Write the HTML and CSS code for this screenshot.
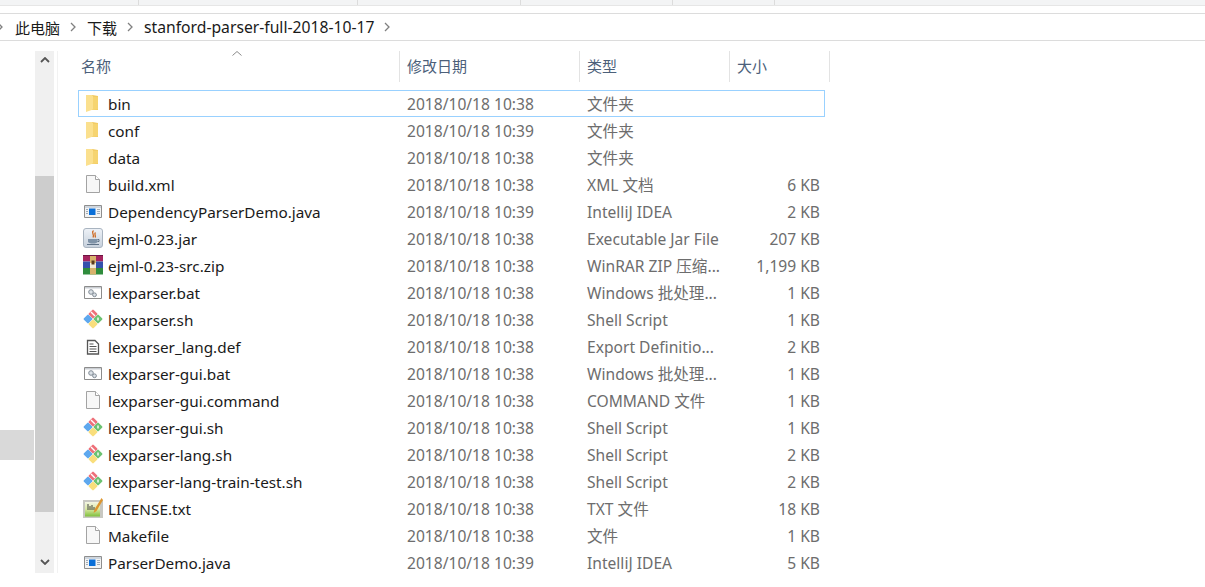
FILE: index.html
```html
<!DOCTYPE html>
<html lang="zh-CN">
<head>
    <meta charset="UTF-8">
    <title>stanford-parser-full-2018-10-17</title>
    <link rel="stylesheet" href="styles.css">
</head>
<body>
    <svg class="sprites" width="0" height="0">
        <defs>
            <linearGradient id="jar-bg" x1="0" y1="0" x2="0" y2="1">
                <stop offset="0" stop-color="#eef2f7"/>
                <stop offset="1" stop-color="#c6d0dc"/>
            </linearGradient>
            <linearGradient id="txt-bg" x1="0" y1="0" x2="0" y2="1">
                <stop offset="0" stop-color="#f4f6e4"/>
                <stop offset=".5" stop-color="#d8e8a0"/>
                <stop offset="1" stop-color="#7fbf3c"/>
            </linearGradient>
        </defs>
        <symbol id="i-folder" viewBox="0 0 20 20">
            <path d="M3 2h6l6 1v14H3z" fill="#efc558"/>
            <path d="M3 2h6l1 1v13.500L3 19z" fill="#fbe08e"/>
            <path d="M10 3.500h5V16.500l-5 .5z" fill="#f6d470"/>
        </symbol>
        <symbol id="i-file" viewBox="0 0 20 20">
            <path d="M3.500 1.500h9l4 4v13h-13z" fill="#f7f7f7" stroke="#a3a3a3"/>
            <path d="M12.500 1.500v4h4" fill="#fff" stroke="#a3a3a3"/>
        </symbol>
        <symbol id="i-idea" viewBox="0 0 20 20">
            <path d="M1.500 4.500h17v12h-17z" fill="#f3f3f3" stroke="#8e8e8e"/>
            <path d="M2 5h16v2H2z" fill="#cfd6de"/>
            <path d="M6 7.500h6.500V14H6z" fill="#0a6fd8"/>
            <path d="M14 8.500h3M14 10.500h3M14 12.500h3M3 8.500h2M3 10.500h2M3 12.500h2" stroke="#a2acb6"/>
        </symbol>
        <symbol id="i-jar" viewBox="0 0 20 20">
            <rect x=".5" y=".5" width="19" height="19" rx="2.500" fill="url(#jar-bg)" stroke="#a9b4c0"/>
            <path d="M10.500 2.500c-3 2.500 1.500 3.500-.5 7M12.500 4.500c-2 2 1 3-.5 5" fill="none" stroke="#cf6a22" stroke-width="1.300"/>
            <path d="M5 11h9.500v2.500c0 1.500-2 2-4.500 2s-5-.5-5-2z" fill="#7f93a8"/>
            <path d="M14.500 11.500h1.500v2h-1.500M4 16.500h12" fill="none" stroke="#5f7287"/>
        </symbol>
        <symbol id="i-rar" viewBox="0 0 20 20">
            <path d="M0 0h20v6.500H0z" fill="#a5245f"/>
            <path d="M0 6.500h20V13H0z" fill="#3450ac"/>
            <path d="M0 13h20v6.500H0z" fill="#2f8c3c"/>
            <path d="M7 0h6v19.500H7z" fill="#d8b26c"/>
            <path d="M7 8h6v5H7z" fill="#f2ead8"/>
            <path d="M8.500 5.500h3v4h-3z" fill="#5b3a1c"/>
            <path d="M0 0h20v1H0z" fill="#6d1540"/>
        </symbol>
        <symbol id="i-bat" viewBox="0 0 20 20">
            <path d="M1.500 4.500h17v12h-17z" fill="#fff" stroke="#8c8c8c"/>
            <path d="M2 5h16v1.500H2z" fill="#c9cdd2"/>
            <circle cx="8" cy="10" r="2.300" fill="#dbe1e7" stroke="#828c96"/>
            <circle cx="11.500" cy="12.800" r="1.900" fill="#dbe1e7" stroke="#828c96"/>
        </symbol>
        <symbol id="i-git" viewBox="0 0 20 20">
            <rect x="1.600" y="6.600" width="6.800" height="6.800" rx="1" transform="rotate(45 5 10)" fill="#5ea8ee"/>
            <rect x="6.600" y="1.600" width="6.800" height="6.800" rx="1" transform="rotate(45 10 5)" fill="#ee7079"/>
            <rect x="11.600" y="6.600" width="6.800" height="6.800" rx="1" transform="rotate(45 15 10)" fill="#6cc272"/>
            <rect x="6.600" y="11.600" width="6.800" height="6.800" rx="1" transform="rotate(45 10 15)" fill="#f9de7c"/>
            <path d="M8 3l4 4M15 8.500v3" stroke="#fff" stroke-width="1.400" fill="none"/>
        </symbol>
        <symbol id="i-def" viewBox="0 0 20 20">
            <path d="M4.500 4.500h7.500l3.500 3.500v10h-11z" fill="#fff" stroke="#555" stroke-width="1.300"/>
            <path d="M6.500 8h4M6.500 10.500h7M6.500 13h7M6.500 15.500h7" stroke="#555" stroke-width="1.200"/>
        </symbol>
        <symbol id="i-txt" viewBox="0 0 20 20">
            <path d="M0 2h20v18H0z" fill="#c8c8c2"/>
            <path d="M2 4h15v14.500H2z" fill="url(#txt-bg)"/>
            <path d="M5 6v6M7 8v4M9 7v5M11 9v3" stroke="#444"/>
            <path d="M18.500 0L11.500 11.500l-1 3.500 3-2L20 2z" fill="#dd962f"/>
        </symbol>
    </svg>

    <div class="toolbar-edge">
        <span class="tick tick-a"></span>
        <span class="tick tick-b"></span>
        <span class="tick tick-c"></span>
        <span class="tick tick-d"></span>
        <span class="tick tick-e"></span>
    </div>

    <nav class="breadcrumb">
        <svg class="crumb-arrow first" viewBox="0 0 6 10"><path d="M1 1l4 4-4 4" fill="none" stroke="#808080" stroke-width="1.300"/></svg>
        <span class="crumb-cjk">此电脑</span>
        <svg class="crumb-arrow" viewBox="0 0 6 10"><path d="M1 1l4 4-4 4" fill="none" stroke="#808080" stroke-width="1.300"/></svg>
        <span class="crumb-cjk">下载</span>
        <svg class="crumb-arrow" viewBox="0 0 6 10"><path d="M1 1l4 4-4 4" fill="none" stroke="#808080" stroke-width="1.300"/></svg>
        <span>stanford-parser-full-2018-10-17</span>
        <svg class="crumb-arrow" viewBox="0 0 6 10"><path d="M1 1l4 4-4 4" fill="none" stroke="#808080" stroke-width="1.300"/></svg>
    </nav>

    <div class="main">
        <div class="nav-pane">
            <div class="nav-active"></div>
        </div>
        <div class="scrollbar">
            <svg class="scroll-arrow" viewBox="0 0 10 6"><path d="M1 5l4-4 4 4" fill="none" stroke="#555" stroke-width="1.800"/></svg>
            <div class="scroll-thumb"></div>
            <svg class="scroll-arrow down" viewBox="0 0 10 6"><path d="M1 1l4 4 4-4" fill="none" stroke="#555" stroke-width="1.800"/></svg>
        </div>

        <div class="list">
            <div class="list-head">
                <svg class="sort-arrow" viewBox="0 0 10 5"><path d="M.5 4.500L5 .5l4.500 4" fill="none" stroke="#8a8a8a"/></svg>
                <div class="col-head col-name">名称</div>
                <div class="col-head col-date">修改日期</div>
                <div class="col-head col-type">类型</div>
                <div class="col-head col-size">大小</div>
            </div>

            <div class="row selected"><span class="name"><svg class="icon"><use href="#i-folder"/></svg>bin</span><span>2018/10/18 10:38</span><span>文件夹</span><span class="size"></span></div>
            <div class="row"><span class="name"><svg class="icon"><use href="#i-folder"/></svg>conf</span><span>2018/10/18 10:39</span><span>文件夹</span><span class="size"></span></div>
            <div class="row"><span class="name"><svg class="icon"><use href="#i-folder"/></svg>data</span><span>2018/10/18 10:38</span><span>文件夹</span><span class="size"></span></div>
            <div class="row"><span class="name"><svg class="icon"><use href="#i-file"/></svg>build.xml</span><span>2018/10/18 10:38</span><span>XML 文档</span><span class="size">6 KB</span></div>
            <div class="row"><span class="name"><svg class="icon"><use href="#i-idea"/></svg>DependencyParserDemo.java</span><span>2018/10/18 10:39</span><span>IntelliJ IDEA</span><span class="size">2 KB</span></div>
            <div class="row"><span class="name"><svg class="icon"><use href="#i-jar"/></svg>ejml-0.23.jar</span><span>2018/10/18 10:38</span><span>Executable Jar File</span><span class="size">207 KB</span></div>
            <div class="row"><span class="name"><svg class="icon"><use href="#i-rar"/></svg>ejml-0.23-src.zip</span><span>2018/10/18 10:38</span><span>WinRAR ZIP 压缩...</span><span class="size">1,199 KB</span></div>
            <div class="row"><span class="name"><svg class="icon"><use href="#i-bat"/></svg>lexparser.bat</span><span>2018/10/18 10:38</span><span>Windows 批处理...</span><span class="size">1 KB</span></div>
            <div class="row"><span class="name"><svg class="icon"><use href="#i-git"/></svg>lexparser.sh</span><span>2018/10/18 10:38</span><span>Shell Script</span><span class="size">1 KB</span></div>
            <div class="row"><span class="name"><svg class="icon"><use href="#i-def"/></svg>lexparser_lang.def</span><span>2018/10/18 10:38</span><span>Export Definitio...</span><span class="size">2 KB</span></div>
            <div class="row"><span class="name"><svg class="icon"><use href="#i-bat"/></svg>lexparser-gui.bat</span><span>2018/10/18 10:38</span><span>Windows 批处理...</span><span class="size">1 KB</span></div>
            <div class="row"><span class="name"><svg class="icon"><use href="#i-file"/></svg>lexparser-gui.command</span><span>2018/10/18 10:38</span><span>COMMAND 文件</span><span class="size">1 KB</span></div>
            <div class="row"><span class="name"><svg class="icon"><use href="#i-git"/></svg>lexparser-gui.sh</span><span>2018/10/18 10:38</span><span>Shell Script</span><span class="size">1 KB</span></div>
            <div class="row"><span class="name"><svg class="icon"><use href="#i-git"/></svg>lexparser-lang.sh</span><span>2018/10/18 10:38</span><span>Shell Script</span><span class="size">2 KB</span></div>
            <div class="row"><span class="name"><svg class="icon"><use href="#i-git"/></svg>lexparser-lang-train-test.sh</span><span>2018/10/18 10:38</span><span>Shell Script</span><span class="size">2 KB</span></div>
            <div class="row"><span class="name"><svg class="icon"><use href="#i-txt"/></svg>LICENSE.txt</span><span>2018/10/18 10:38</span><span>TXT 文件</span><span class="size">18 KB</span></div>
            <div class="row"><span class="name"><svg class="icon"><use href="#i-file"/></svg>Makefile</span><span>2018/10/18 10:38</span><span>文件</span><span class="size">1 KB</span></div>
            <div class="row"><span class="name"><svg class="icon"><use href="#i-idea"/></svg>ParserDemo.java</span><span>2018/10/18 10:39</span><span>IntelliJ IDEA</span><span class="size">5 KB</span></div>
        </div>
    </div>
</body>
</html>
```

FILE: styles.css
```css
body {
    margin: 0;
    height: 587px;
    overflow: hidden;
    background: #fff;
    font-family: "Noto Sans", "Noto Sans CJK SC", sans-serif;
    font-size: 15.5px;
    color: #1a1a1a;
}
.sprites {
    display: block;
    height: 0;
}
.toolbar-edge {
    position: relative;
    height: 5px;
    margin-bottom: 7px;
    background: #f3f4f5;
    border-bottom: 1px solid #e6e6e6;
}
.tick {
    position: absolute;
    top: 0;
    width: 1px;
    height: 5px;
    background: #dcdcdc;
}
.tick-a { left: 138px; }
.tick-b { left: 357px; }
.tick-c { left: 520px; }
.tick-d { left: 672px; }
.tick-e { left: 774px; }
.breadcrumb {
    display: flex;
    align-items: center;
    height: 26px;
    border-top: 1px solid #dcdcdc;
    border-bottom: 1px solid #dcdcdc;
    font-size: 15.7px;
    color: #1a1a1a;
}
.crumb-cjk {
    font-size: 15px;
}
.crumb-arrow {
    width: 6px;
    height: 10px;
    margin: 0 11px 0 10px;
}
.crumb-arrow.first {
    margin: 0 12px 0 -3px;
}
.main {
    display: flex;
    height: 532px;
    padding-top: 10px;
}
.nav-pane {
    width: 34px;
    padding-top: 379px;
    box-sizing: border-box;
}
.nav-active {
    height: 30px;
    background: #d9d9d9;
}
.scrollbar {
    display: flex;
    flex-direction: column;
    align-items: center;
    width: 19px;
    height: 522px;
    margin-left: 1px;
    background: #f0f0f0;
}
.scroll-arrow {
    width: 10px;
    height: 6px;
    margin-top: 6px;
}
.scroll-arrow.down {
    margin-top: 47px;
}
.scroll-thumb {
    width: 100%;
    height: 336px;
    margin-top: 113px;
    background: #cdcdcd;
}
.list {
    flex: 1;
    height: 522px;
    margin-left: 3px;
    padding-left: 20px;
    border-left: 1px solid #f2f2f2;
    overflow: hidden;
}
.list-head {
    position: relative;
    display: flex;
    height: 31px;
    margin-bottom: 8px;
}
.col-head {
    box-sizing: border-box;
    padding-left: 7px;
    font-size: 15px;
    line-height: 31px;
    color: #4c607a;
    border-right: 1px solid #e3e3e3;
}
.col-name { width: 322px; padding-left: 3px; }
.col-date { width: 180px; }
.col-type { width: 150px; }
.col-size { width: 100px; }
.sort-arrow {
    position: absolute;
    left: 154px;
    top: 0;
    width: 10px;
    height: 5px;
}
.row {
    display: grid;
    grid-template-columns: 329px 180px 150px 88px;
    grid-auto-rows: 27px;
    width: 747px;
    height: 27px;
    font-size: 15.6px;
    line-height: 29px;
    color: #6d6d6d;
    white-space: nowrap;
}
.row.selected {
    box-shadow: inset 0 0 0 1px #99d1ff;
}
.name {
    display: flex;
    align-items: center;
    height: 29px;
    font-size: 15.3px;
    color: #1a1a1a;
}
.icon {
    flex: none;
    width: 20px;
    height: 20px;
    margin: 0 5px 3px 5px;
}
.size {
    text-align: right;
    padding-right: 5px;
}
```
